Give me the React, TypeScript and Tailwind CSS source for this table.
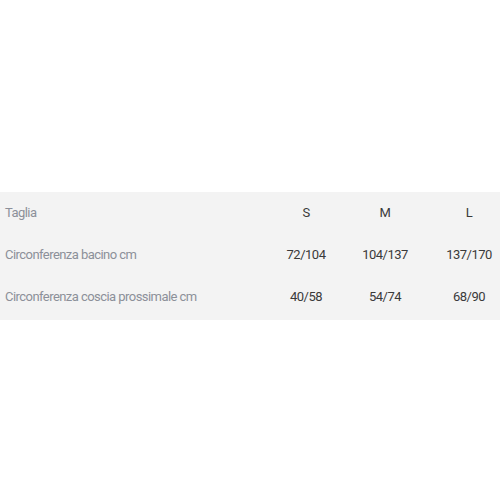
import React from "react";

const rows = [
  { label: "Taglia", vals: ["S", "M", "L"] },
  { label: "Circonferenza bacino cm", vals: ["72/104", "104/137", "137/170"] },
  { label: "Circonferenza coscia prossimale cm", vals: ["40/58", "54/74", "68/90"] },
];

export default function App() {
  return (
    <div className="w-[500px] h-[500px] bg-white flex flex-col" style={{ fontFamily: "Roboto, 'Liberation Sans', sans-serif" }}>
      <div className="h-[192px]" />
      <div className="bg-[#f3f3f3] h-[128px] flex flex-col">
        {rows.map((r) => (
          <div key={r.label} className="grid grid-cols-[266px_80px_78px_76px] h-[42px] items-center text-[13px]">
            <div className="pl-[5px] text-[#8c9099] tracking-[-0.55px]">{r.label}</div>
            <div className="text-center text-[#3a3a3a] tracking-[-0.5px]">{r.vals[0]}</div>
            <div className="text-center text-[#3a3a3a] tracking-[-0.5px]">{r.vals[1]}</div>
            <div className="text-center text-[#3a3a3a] tracking-[-0.5px] pl-[14px]">{r.vals[2]}</div>
          </div>
        ))}
      </div>
    </div>
  );
}
